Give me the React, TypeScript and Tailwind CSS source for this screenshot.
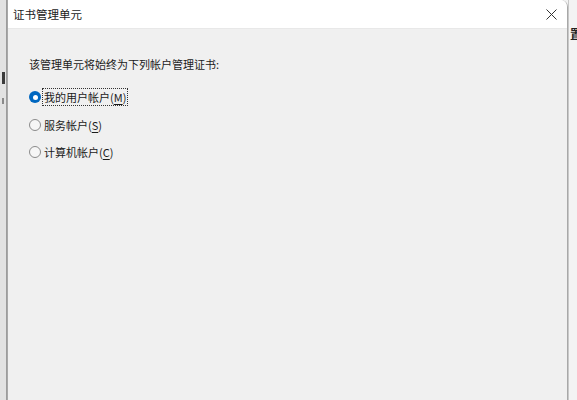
import React from "react";

const font = { fontFamily: '"Noto Sans CJK SC", "Noto Sans", sans-serif' };

function Radio({ checked }: { checked?: boolean }) {
  return checked ? (
    <span className="flex h-[12px] w-[12px] items-center justify-center rounded-full bg-[#0067c0]">
      <span className="h-[5px] w-[5px] rounded-full bg-white" />
    </span>
  ) : (
    <span className="h-[12px] w-[12px] rounded-full border border-[#8b8b8b] bg-[#f6f6f6]" />
  );
}

function Option({
  checked,
  pre,
  key1,
  focused,
  className,
}: {
  checked?: boolean;
  pre: string;
  key1: string;
  focused?: boolean;
  className?: string;
}) {
  return (
    <div className={"flex h-[18px] items-center " + (className ?? "")}>
      <Radio checked={checked} />
      <span
        className={
          "ml-[1px] flex h-[18px] items-center px-[1px] text-[11px] leading-[16px] text-[#1b1b1b] " +
          (focused ? "border border-dotted border-[#333]" : "border border-transparent")
        }
      >
        {pre}(<span className="underline underline-offset-[2px]">{key1}</span>)
      </span>
    </div>
  );
}

export default function App() {
  return (
    <div className="flex h-[400px] w-[577px] overflow-hidden bg-[#f3f3f3]" style={font}>
      {/* left background strip */}
      <div className="flex w-[7px] flex-col overflow-hidden border-r border-[#9c9c9c] bg-[#e2e2e2]">
        <div className="mt-[72px] ml-[2px] h-[12px] w-[3px] bg-[#3a3a3a]" />
        <div className="mt-[14px] ml-[2px] h-[6px] w-[2px] bg-[#8a8a8a]" />
      </div>
      {/* dialog */}
      <div className="flex w-[561px] flex-col overflow-hidden rounded-tr-[7px] border-r border-l border-[#a8a8a8] bg-[#f0f0f0]">
        <div className="flex h-[28px] items-center justify-between bg-white pr-[9px] pl-[5px]">
          <span className="text-[11.5px] leading-[16px] text-[#1a1a1a]">证书管理单元</span>
          <svg width="11" height="11" viewBox="0 0 11 11" className="mr-[1px]">
            <path d="M0.5 0.5 L10.5 10.5 M10.5 0.5 L0.5 10.5" stroke="#333" strokeWidth="1" fill="none" />
          </svg>
        </div>
        <div className="h-[1px] bg-[#e8e8e8]" />
        <div className="flex flex-col pt-[26px] pl-[21px]">
          <div className="h-[18px] text-[11px] leading-[18px] text-[#1b1b1b]">
            该管理单元将始终为下列帐户管理证书:
          </div>
          <Option checked pre="我的用户帐户" key1="M" focused className="mt-[15px]" />
          <Option pre="服务帐户" key1="S" className="mt-[10px]" />
          <Option pre="计算机帐户" key1="C" className="mt-[9px]" />
        </div>
      </div>
      {/* right background strip */}
      <div className="flex w-[9px] flex-col overflow-hidden border-l border-[#c8c8c8] bg-[#f3f3f3]">
        <div className="mt-[26px] ml-[1px] text-[12px] leading-[16px] font-bold whitespace-nowrap text-[#222]">
          置
        </div>
      </div>
    </div>
  );
}
